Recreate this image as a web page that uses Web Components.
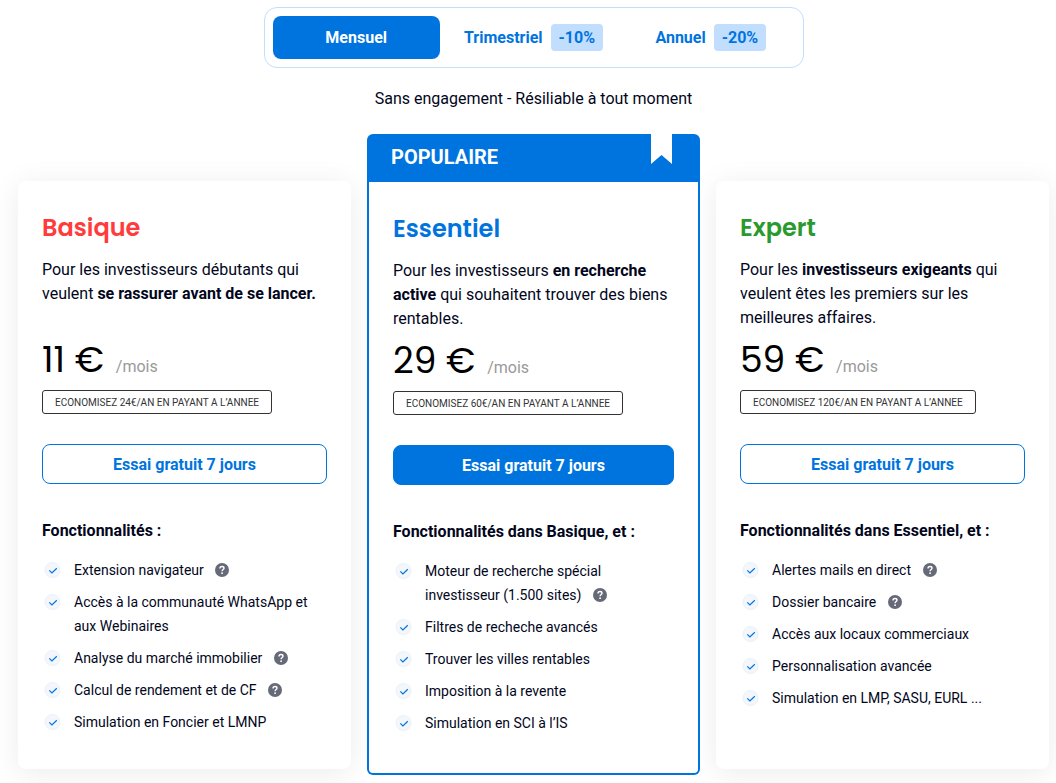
<!DOCTYPE html>
<html lang="fr">
<head>
<meta charset="utf-8">
<meta name="viewport" content="width=device-width, initial-scale=1">
<title>Tarifs</title>
<style>
    body {
        margin: 0;
        background: #fff;
        color: #02061c;
        font: 16px/24px Roboto, "Liberation Sans", sans-serif;
        --blue: #0074de;
        --title-font: Poppins, Inter, sans-serif;
    }
</style>
</head>
<body>
<pricing-page>
    <billing-switch slot="switch">
        <billing-option selected>Mensuel</billing-option>
        <billing-option discount="-10%">Trimestriel</billing-option>
        <billing-option discount="-20%">Annuel</billing-option>
    </billing-switch>
    <span slot="note">Sans engagement - Résiliable à tout moment</span>

    <plan-card name="Basique" price="11 €" saving="ECONOMISEZ 24€/AN EN PAYANT A L’ANNEE" style="--accent: #ff3b3b">
        <span slot="description">Pour les investisseurs débutants qui veulent <b>se rassurer avant de se lancer.</b></span>
        <span slot="heading">Fonctionnalités :</span>
        <plan-feature help>Extension navigateur</plan-feature>
        <plan-feature>Accès à la communauté WhatsApp et aux Webinaires</plan-feature>
        <plan-feature help>Analyse du marché immobilier</plan-feature>
        <plan-feature help>Calcul de rendement et de CF</plan-feature>
        <plan-feature>Simulation en Foncier et LMNP</plan-feature>
    </plan-card>

    <plan-card name="Essentiel" price="29 €" saving="ECONOMISEZ 60€/AN EN PAYANT A L’ANNEE" ribbon="POPULAIRE" style="--accent: #0074de">
        <span slot="description">Pour les investisseurs <b>en recherche active</b> qui souhaitent trouver des biens rentables.</span>
        <span slot="heading">Fonctionnalités dans Basique, et :</span>
        <plan-feature help>Moteur de recherche spécial investisseur (1.500 sites)</plan-feature>
        <plan-feature>Filtres de recheche avancés</plan-feature>
        <plan-feature>Trouver les villes rentables</plan-feature>
        <plan-feature>Imposition à la revente</plan-feature>
        <plan-feature>Simulation en SCI à l’IS</plan-feature>
    </plan-card>

    <plan-card name="Expert" price="59 €" saving="ECONOMISEZ 120€/AN EN PAYANT A L’ANNEE" style="--accent: #2a9a2e">
        <span slot="description">Pour les <b>investisseurs exigeants</b> qui veulent êtes les premiers sur les meilleures affaires.</span>
        <span slot="heading">Fonctionnalités dans Essentiel, et :</span>
        <plan-feature help>Alertes mails en direct</plan-feature>
        <plan-feature help>Dossier bancaire</plan-feature>
        <plan-feature>Accès aux locaux commerciaux</plan-feature>
        <plan-feature>Personnalisation avancée</plan-feature>
        <plan-feature>Simulation en LMP, SASU, EURL ...</plan-feature>
    </plan-card>
</pricing-page>

<script>
class PricingPage extends HTMLElement {
    constructor() {
        super();
        this.shadowDOM = this.attachShadow({mode: "open"});
        this.shadowDOM.innerHTML = `
        <style>
            :host {
                display: block;
                padding: 7px 7px 8px 18px;
            }
            p {
                margin: 19px 0 23px;
                text-align: center;
            }
            .plans {
                display: grid;
                grid-template-columns: repeat(3, minmax(0, 1fr));
                gap: 16px;
            }
            @media (max-width: 860px) {
                .plans {
                    grid-template-columns: minmax(0, 1fr);
                }
            }
        </style>
        <slot name="switch"></slot>
        <p><slot name="note"></slot></p>
        <div class="plans"><slot></slot></div>`;
    }
}

class BillingSwitch extends HTMLElement {
    constructor() {
        super();
        this.shadowDOM = this.attachShadow({mode: "open"});
        this.shadowDOM.innerHTML = `
        <style>
            :host {
                box-sizing: border-box;
                display: grid;
                grid-template-columns: repeat(3, 1fr);
                gap: 10px;
                max-width: 540px;
                margin: 0 auto;
                padding: 8px;
                border: 1px solid #c2deff;
                border-radius: 13px;
            }
        </style>
        <slot></slot>`;
    }

    connectedCallback() {
        this.addEventListener("click", (e) => {
            const option = e.target.closest("billing-option");
            if (!option) return;
            this.querySelectorAll("billing-option").forEach((el) => {
                el.toggleAttribute("selected", el === option);
            });
        });
    }
}

class BillingOption extends HTMLElement {
    static get observedAttributes() {
        return ["selected"];
    }

    constructor() {
        super();
        this.shadowDOM = this.attachShadow({mode: "open"});
    }

    connectedCallback() {
        this.render();
    }

    attributeChangedCallback() {
        this.render();
    }

    render() {
        const discount = this.getAttribute("discount");
        this.shadowDOM.innerHTML = `
        <style>
            :host {
                display: grid;
            }
            button {
                display: flex;
                align-items: center;
                justify-content: center;
                gap: 8px;
                min-height: 43px;
                padding: 0;
                border: 0;
                border-radius: 8px;
                background: none;
                color: var(--blue);
                font: inherit;
                font-weight: 700;
                cursor: pointer;
            }
            :host([selected]) button {
                background: var(--blue);
                color: #fff;
            }
            .discount {
                padding: 2px 8px 1px;
                border-radius: 4px;
                background: #c2deff;
                color: var(--blue);
            }
        </style>
        <button type="button" aria-pressed="${this.hasAttribute("selected")}">
            <span><slot></slot></span>
            ${discount ? `<span class="discount">${discount}</span>` : ""}
        </button>`;
    }
}

class PlanCard extends HTMLElement {
    constructor() {
        super();
        this.shadowDOM = this.attachShadow({mode: "open"});
    }

    connectedCallback() {
        this.render();
    }

    ribbon() {
        if (!this.hasAttribute("ribbon")) return "";
        return `
        <header>
            <span>${this.getAttribute("ribbon")}</span>
            <svg width="21" height="30" viewBox="0 0 21 30" aria-hidden="true">
                <path d="M0 0h21v30L10.500 21 0 30z" fill="#fff"/>
            </svg>
        </header>`;
    }

    render() {
        this.shadowDOM.innerHTML = `
        <style>
            :host {
                display: flex;
                flex-direction: column;
                margin: 47px 0 6px;
                border-radius: 8px;
                background: #fff;
                box-shadow: 0 4px 30px rgba(0, 0, 0, .08);
            }
            /* sits above the shadows of its neighbours */
            :host([ribbon]) {
                position: relative;
                margin: 0;
                border-radius: 6px;
                background: var(--blue);
                box-shadow: none;
            }
            header {
                display: flex;
                justify-content: space-between;
                align-items: flex-start;
                padding: 0 28px 2px 24px;
                color: #fff;
                font-size: 20px;
                font-weight: 700;
                line-height: 46px;
            }
            header svg {
                display: block;
            }
            .body {
                flex: 1;
                padding: 29px 24px 35px;
            }
            :host([ribbon]) .body {
                margin: 0 2px 2px;
                border-radius: 0 0 4px 4px;
                background: #fff;
                padding-bottom: 37px;
            }
            h2 {
                margin: 0 0 12px;
                color: var(--accent);
                font: 600 24px/36px var(--title-font);
            }
            .description {
                min-height: 72px;
                margin: 0 0 8px;
            }
            .price {
                display: flex;
                align-items: baseline;
                gap: 12px;
                margin: 0 0 8px;
                color: #999;
            }
            .price strong {
                color: #000;
                font: 400 36px/44px var(--title-font);
            }
            .saving {
                display: block;
                width: fit-content;
                padding: 1px 12px 0;
                border: 1px solid #333;
                border-radius: 3px;
                color: #333;
                font-size: 10px;
                line-height: 21px;
            }
            button {
                width: 100%;
                height: 40px;
                margin: 30px 0 35px;
                padding: 1px 0 0;
                border: 1px solid var(--blue);
                border-radius: 8px;
                background: #fff;
                color: var(--blue);
                font: inherit;
                font-weight: 700;
                cursor: pointer;
            }
            :host([ribbon]) button {
                background: var(--blue);
                color: #fff;
            }
            h3 {
                margin: 0 0 15px;
                font-size: 16px;
                font-weight: 700;
            }
            .features {
                display: grid;
                gap: 8px;
            }
        </style>
        ${this.ribbon()}
        <div class="body">
            <h2>${this.getAttribute("name")}</h2>
            <p class="description"><slot name="description"></slot></p>
            <p class="price"><strong>${this.getAttribute("price")}</strong><span>/mois</span></p>
            <span class="saving">${this.getAttribute("saving")}</span>
            <button type="button">Essai gratuit 7 jours</button>
            <h3><slot name="heading"></slot></h3>
            <div class="features" role="list"><slot></slot></div>
        </div>`;
    }
}

class PlanFeature extends HTMLElement {
    constructor() {
        super();
        this.shadowDOM = this.attachShadow({mode: "open"});
    }

    connectedCallback() {
        this.setAttribute("role", "listitem");
        this.render();
    }

    helpIcon() {
        if (!this.hasAttribute("help")) return "";
        return `<svg class="help" width="14" height="14" viewBox="0 0 14 14" aria-hidden="true">
            <circle cx="7" cy="7" r="7" fill="#666978"/>
            <path d="M5 5.500C5 4.300 5.800 3.500 7 3.500s2 .7 2 1.700C9 6.500 7.100 6.600 7.100 8.200" fill="none" stroke="#fff" stroke-width="1.400"/>
            <circle cx="7.100" cy="10.200" r=".9" fill="#fff"/>
        </svg>`;
    }

    render() {
        this.shadowDOM.innerHTML = `
        <style>
            :host {
                display: flex;
                gap: 13px;
                font-size: 14px;
            }
            .check {
                flex: none;
                margin: 4px 0 0 2px;
            }
            .help {
                margin-left: 8px;
                vertical-align: -2px;
            }
        </style>
        <svg class="check" width="17" height="16" viewBox="0 0 17 16" aria-hidden="true">
            <circle cx="8.500" cy="8" r="7.600" fill="#f3f7fb" stroke="#e6eff9" stroke-width=".8"/>
            <path d="M5.300 8.400l2.600 2.600 4.900-4.800" fill="none" stroke="#0074de" stroke-width="1.200"/>
        </svg>
        <span><slot></slot> ${this.helpIcon()}</span>`;
    }
}

customElements.define("pricing-page", PricingPage);
customElements.define("billing-switch", BillingSwitch);
customElements.define("billing-option", BillingOption);
customElements.define("plan-card", PlanCard);
customElements.define("plan-feature", PlanFeature);
</script>
</body>
</html>
